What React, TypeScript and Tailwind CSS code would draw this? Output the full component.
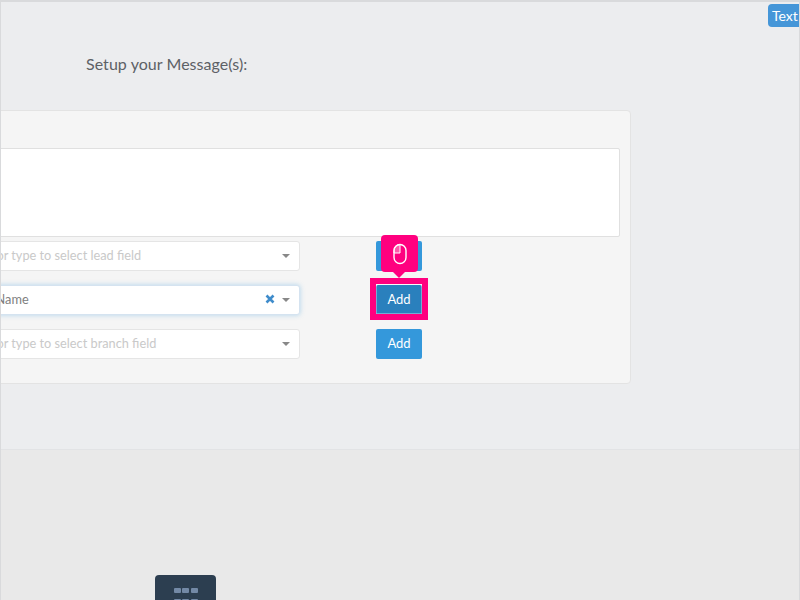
import React from 'react';

const SelectField = ({ text, focused, muted }: { text: string; focused?: boolean; muted?: boolean }) => (
  <div
    className={`flex items-center w-[338px] h-[30px] pl-[3px] pr-[8px] bg-white border rounded-[3px] text-[12.75px] ${
      focused ? 'border-[#d5e3f0] shadow-[0_0_5px_rgba(52,152,219,0.35)]' : 'border-[#e5e5e5]'
    } ${muted ? 'text-[#c9c9c9]' : 'text-[#808080]'}`}
  >
    <span className="flex-1 whitespace-nowrap">{text}</span>
    {focused && (
      <svg width="10" height="10" viewBox="0 0 10 10" className="mr-[7px] -mt-[2px]">
        <path d="M1.5 1.5L8.5 8.5M8.5 1.5L1.5 8.5" stroke="#3f8ccb" strokeWidth="2.6" />
      </svg>
    )}
    <span className="w-0 h-0 mr-[1px] border-x-[4px] border-x-transparent border-t-[4px] border-t-[#888888]" />
  </div>
);

const AddButton = ({ dark }: { dark?: boolean }) => (
  <button
    className={`w-[46px] h-[30px] rounded-[2px] text-white text-[13px] ${dark ? 'bg-[#2a80bd]' : 'bg-[#3498db]'}`}
  >
    Add
  </button>
);

const Row = ({ children }: { children: React.ReactNode }) => (
  <div className="flex items-center gap-[76px]">{children}</div>
);

export default function App() {
  return (
    <div
      className="relative w-[800px] h-[600px] overflow-hidden flex flex-col bg-[#ecedef] border-t-2 border-l border-r border-[#d9dadc]"
      style={{ fontFamily: 'Lato, sans-serif' }}
    >
      <div className="h-[448px] border-b border-[#e2e3e5]">
        <h2 className="pl-[85px] pt-[51px] text-[16px] leading-[22px] tracking-[0.003em] text-[#5d6166]">
          Setup your Message(s):
        </h2>
        <div className="ml-[-43px] mt-[35px] w-[673px] h-[274px] pt-[37px] pl-[3px] pr-[10px] bg-[#f5f5f5] border border-[#e3e3e3] rounded-[4px]">
          <div className="h-[89px] bg-white border border-[#e0e0e0] rounded-[2px]" />
          <div className="flex flex-col gap-[14px] mt-[4px]">
            <Row>
              <SelectField muted text="Click or type to select lead field" />
              <AddButton />
            </Row>
            <Row>
              <SelectField focused text="Lead Name" />
              <AddButton dark />
            </Row>
            <Row>
              <SelectField muted text="Click or type to select branch field" />
              <AddButton />
            </Row>
          </div>
        </div>
      </div>
      <div className="flex-1 bg-[#e9e9e9] flex items-end pl-[154px]">
        <div className="w-[61px] h-[25px] bg-[#2c3e50] rounded-t-[4px] flex justify-center pt-[13px] overflow-hidden">
          <div className="grid grid-cols-3 gap-x-[1.5px] gap-y-[2px] h-[20px]">
            {[0, 1, 2, 3, 4, 5].map((i) => (
              <span key={i} className="w-[7px] h-[5px] rounded-[1px] bg-[#7389a6]" />
            ))}
          </div>
        </div>
      </div>

      {/* overlays from the walkthrough */}
      <div className="absolute left-[767px] top-[2px] w-[40px] h-[23px] pl-[4px] bg-[#4596d8] rounded-[4px] text-white text-[14px] leading-[23px]">
        Text
      </div>
      <div className="absolute left-[369px] top-[276px] w-[58px] h-[42px] border-[6px] border-[#ff007f] shadow-[inset_0_0_0_1px_rgba(255,255,255,0.35)]" />
      <div className="absolute left-[380px] top-[233px] w-[37px] h-[37px] rounded-[4px] bg-[#ff007f] flex items-center justify-center">
        <svg width="14" height="22" viewBox="0 0 14 22" fill="none">
          <rect x="1" y="1.5" width="12" height="19" rx="6" stroke="white" strokeWidth="1.4" />
          <path d="M7 1.5A6 6 0 0 0 1 7.5V10H7Z" fill="#ffffff" fillOpacity="0.35" stroke="white" strokeWidth="1" />
        </svg>
        <span className="absolute left-[12px] top-[37px] w-0 h-0 border-x-[6px] border-x-transparent border-t-[6px] border-t-[#ff007f]" />
      </div>
    </div>
  );
}
